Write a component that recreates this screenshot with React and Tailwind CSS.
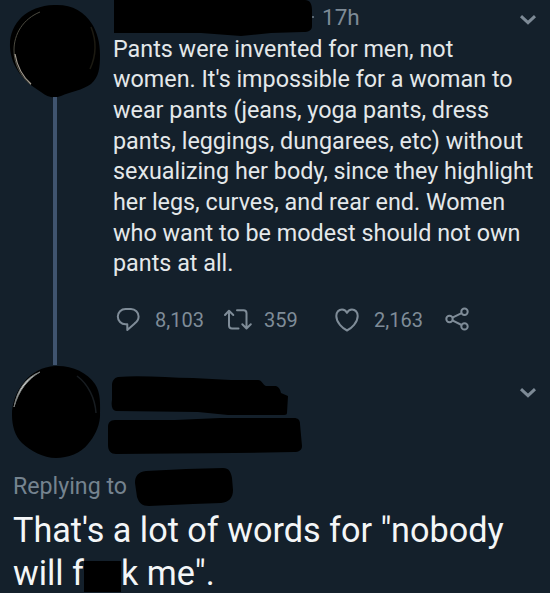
/**
 * Tweet thread view (dim theme) with redacted users
 */

import React from 'react';

const tweetLines = [
  { text: 'Pants were invented for men, not' },
  { text: "women. It's impossible for a woman to" },
  { text: 'wear pants (jeans, yoga pants, dress' },
  { text: 'pants, leggings, dungarees, etc) without' },
  { text: 'sexualizing her body, since they highlight' },
  { text: 'her legs, curves, and rear end. Women' },
  { text: 'who want to be modest should not own' },
  { text: 'pants at all.' }
];

function Chevron({ className }) {
  return (
    <svg className={className} width="18" height="12" viewBox="0 0 18 12" fill="none" stroke="#7d8a96" strokeWidth="3">
      <path d="M2 2.200 9 8.600l7-6.400" />
    </svg>
  );
}

function ReplyIcon() {
  return (
    <svg className="w-[24px] h-[26px]" viewBox="0 0 24 26" fill="none" stroke="#7f8c98" strokeWidth="2" strokeLinejoin="round">
      <path d="M9.500 2h5.500c4.200 0 7.600 3.400 7.600 7.500 0 3-1.500 5.100-3.900 6.900L11.300 23V17.200H9.500C5.200 17.200 1.800 13.700 1.800 9.500S5.200 2 9.500 2Z" />
    </svg>
  );
}

function RetweetIcon() {
  return (
    <svg className="w-[30px] h-[24px]" viewBox="0 0 30 24" fill="none" stroke="#7f8c98" strokeWidth="2" strokeLinecap="round" strokeLinejoin="round">
      <path d="M2 7 6 2.800 10.300 7M6 3.500v14a3 3 0 0 0 3 3h6.500" />
      <path d="M19.300 16.300l4.200 4.200 4.300-4.200M23.500 20V5.200a3 3 0 0 0-3-3H14" />
    </svg>
  );
}

function HeartIcon() {
  return (
    <svg className="w-[26px] h-[26px]" viewBox="0 0 26 26" fill="none" stroke="#7f8c98" strokeWidth="2" strokeLinejoin="round">
      <path d="M13 23.500C8.500 21.200 2.300 15.500 2.300 9c0-3.800 2.500-6.600 5.700-6.600 2.200 0 4 1.300 5 3.500 1-2.200 2.800-3.500 5-3.500 3.200 0 5.700 2.800 5.700 6.600 0 6.500-6.200 12.200-10.700 14.500Z" />
    </svg>
  );
}

function ShareIcon() {
  return (
    <svg className="w-[26px] h-[26px]" viewBox="0 0 26 26" fill="none" stroke="#7f8c98" strokeWidth="2">
      <circle cx="5.500" cy="12.000" r="3.200" />
      <circle cx="20.500" cy="4.700" r="3.200" />
      <circle cx="20.500" cy="19.400" r="3.200" />
      <path d="m8.400 10.600 9.200-4.500M8.400 13.400l9.200 4.600" />
    </svg>
  );
}

function TopAvatar() {
  return (
    <svg className="block w-[113px] h-[98px] shrink-0" viewBox="0 0 113 98">
      <path d="M54 5C71 4 84 11 92 24c5 8 8 18 8 31 0 13-1 22-9 29-8 6-21 8-30 12-7 3-14 1-20-4C25 82 11 68 10 47 9 24 26 6 54 5Z" fill="#000" />
      <path d="M40 12C23 19 14 34 14 50c0 14 6 26 17 35" fill="none" stroke="#4b4a40" strokeWidth="1" />
      <path d="M15 54c2 12 7 22 16 30" fill="none" stroke="#a49d93" strokeWidth="1.200" />
      <path d="M91 27c6 15 5 29-1 42" fill="none" stroke="#1c1a12" strokeWidth="1.500" />
    </svg>
  );
}

function BottomAvatar() {
  return (
    <svg className="block w-[108px] h-[95px] shrink-0" viewBox="0 0 108 95">
      <path d="M55 1c16-1 32 6 40 18 6 9 5 20 5 33-1 11-6 20-12 27-7 9-20 14-32 14-13 0-25-7-34-15-7-7-10-17-10-28C12 26 30 2 55 1Z" fill="#000" />
      <path d="M14 42C17 25 26 12 40 7 28 14 19 25 14 42Z" fill="#d5d8d6" stroke="#777b7a" strokeWidth="1" />
      <path d="M77 11c11 8 18 22 19 37" fill="none" stroke="#171c20" strokeWidth="1.500" />
    </svg>
  );
}

export default function App() {
  return (
    <div className="flex h-[593px] w-[550px] flex-col overflow-hidden bg-[#14202b] font-['Roboto',sans-serif]">
      <div className="flex h-[365px] shrink-0">
        <div className="flex w-[113px] shrink-0 flex-col">
          <TopAvatar />
          <div className="-mt-px ml-[53px] w-[4px] flex-1 bg-[#40546f]" />
        </div>

        <div className="flex flex-1 flex-col">
          <div className="flex h-[33.500px] shrink-0 items-start">
            <svg className="block h-[36px] w-[202px] shrink-0" viewBox="0 0 202 36">
              <path d="M1 0H60l50 3 82 2c5 0 7 3 7 9v12c0 4-3 6-9 6l-32 1-30 3-40-3H1Z M60 0H192c5 0 7 4 7 10v4l-80 2Z" fill="#000" />
              <circle cx="200" cy="17" r="1" fill="#71808e" />
            </svg>
            <span className="ml-[7px] mt-[4px] text-[22.500px] leading-[26px] text-[#7d8a96]">17h</span>
            <Chevron className="ml-auto mr-[13px] mt-[14px]" />
          </div>

          <p className="text-[23.330px] leading-[30.700px] text-[#e4e8ea]">
            {tweetLines.map((line) => (
              <span key={line.text} className="block whitespace-nowrap">
                {line.text}
              </span>
            ))}
          </p>

          <div className="mt-[26px] flex h-[30px] items-center pl-[3px] text-[20px] text-[#7f8c98]">
            <ReplyIcon />
            <span className="ml-[15px] w-[68px]">8,103</span>
            <RetweetIcon />
            <span className="ml-[11px] w-[70px]">359</span>
            <HeartIcon />
            <span className="ml-[14px] w-[70px]">2,163</span>
            <ShareIcon />
          </div>
        </div>
      </div>

      <div className="flex h-[99px] shrink-0">
        <BottomAvatar />
        <svg className="block h-[95px] w-[200px]" viewBox="0 0 200 95">
          <path d="M10 12c25-2 50 1 75 1l38 2h27c4 0 5 5 8 6h10c3 1 4 3 5 7l7 3-1 17c0 2-2 2-5 2h-54l-30-3-82-1c-4-1-5-5-4-11L4 20c0-4 2-7 6-8Z" fill="#000" />
          <path d="M7 55h60l45-2h74c4 0 6 2 6 6l2 22c0 4-3 6-8 6l-60 1-118 1c-5 0-8-3-8-9V62c0-4 2-7 7-7Z" fill="#000" />
        </svg>
        <Chevron className="ml-auto mr-[13px] mt-[22px]" />
      </div>

      <div className="flex h-[43px] shrink-0 items-start pl-[13px]">
        <span className="mt-[9px] w-[121px] text-[23.200px] leading-[26px] text-[#75838f]">Replying to</span>
        <svg className="mt-[3px] block h-[40px] w-[102px]" viewBox="0 0 102 40">
          <path d="M12 4 52 2l37-1c6 0 8 4 9 10l1 12c0 8-4 12-12 13l-28 1-44 2c-7 0-10-3-12-9L1 16C1 9 4 5 12 4Z" fill="#000" />
        </svg>
      </div>

      <div className="whitespace-nowrap pl-[13px] pt-[2px] text-[34.200px] leading-[43px] text-[#f4f6f7]">
        <div>That's a lot of words for "nobody</div>
        <div className="flex">
          <span>will f</span>
          <span className="mt-[9px] h-[31px] w-[37px] bg-black" />
          <span>k me".</span>
        </div>
      </div>
    </div>
  );
}
